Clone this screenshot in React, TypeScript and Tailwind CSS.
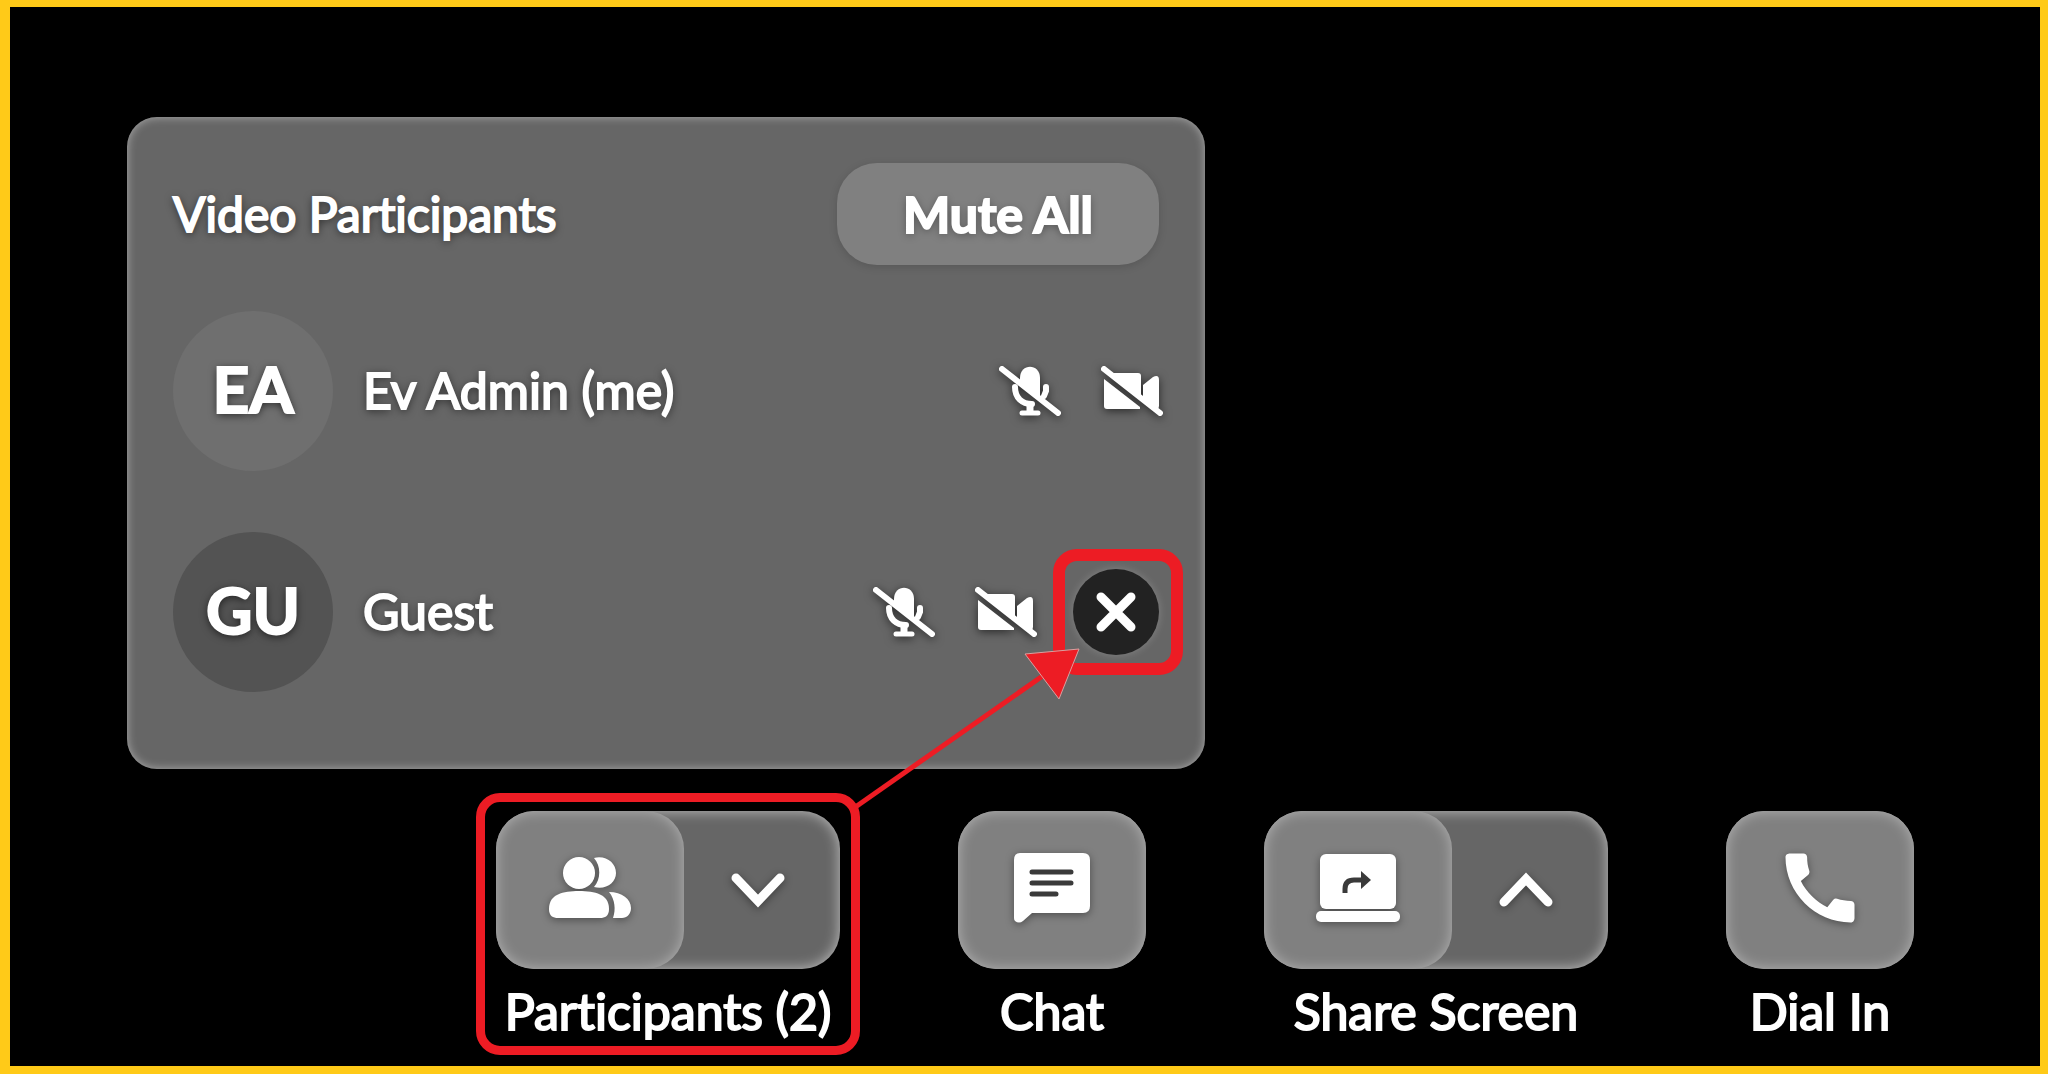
import type { ReactNode } from "react"
import { MdCall } from "react-icons/md"

function MicOffIcon() {
  return (
    <svg width="62" height="50" viewBox="0 0 62 50" fill="none" stroke="#fff" aria-hidden="true">
      <path d="M21 12C21 -3 41 -3 41 12V31L21 17Z" fill="#fff" stroke="none" />
      <path d="M16 21C16 32 23 38 33 38M47 21V25L45 30" strokeWidth="6" strokeLinecap="round" />
      <path d="M31 37V46" strokeWidth="7" />
      <path d="M23 47H39" strokeWidth="5" strokeLinecap="round" />
      <path d="M3 3L59 47" strokeWidth="6" strokeLinecap="round" />
    </svg>
  )
}

function VideoOffIcon() {
  return (
    <svg width="62" height="50" viewBox="0 0 62 50" fill="#fff" aria-hidden="true">
      <path d="M10 7H37Q40 7 40 10V30Z" />
      <path d="M3 13L39 41V43H6Q3 43 3 40Z" />
      <path d="M42 19L52 11Q58 8 58 14V40Q58 44 54 42L42 33Z" />
      <path d="M3 3L59 47" stroke="#fff" strokeWidth="6" strokeLinecap="round" />
    </svg>
  )
}

function PeopleIcon() {
  return (
    <svg width="84" height="64" viewBox="0 0 84 64" fill="#fff" aria-hidden="true">
      <circle cx="31" cy="17" r="16" />
      <path d="M46 2C58-1 68 7 68 17S58 34 46 31C53 23 53 10 46 2Z" />
      <path d="M1 53C1 38 15 35 31 35S61 38 61 53C61 60 57 62 52 62H10C5 62 1 60 1 53Z" />
      <path d="M61 36C74 36 83 43 83 52C83 58 79 62 74 62H65C68 54 67 43 61 36Z" />
    </svg>
  )
}

function ChatIcon() {
  return (
    <svg width="78" height="72" viewBox="0 0 78 72" aria-hidden="true">
      <path d="M7 1H70Q77 1 77 8V54Q77 61 70 61H19L10 69Q6 72 2 69Q1 68 1 66V8Q1 1 7 1Z" fill="#fff" />
      <path d="M19 20H58M19 31H58M19 42H43" stroke="#3a3a3a" strokeWidth="5" strokeLinecap="round" />
    </svg>
  )
}

function ShareIcon() {
  return (
    <svg width="84" height="69" viewBox="0 0 84 69" aria-hidden="true">
      <rect x="4" y="0" width="76" height="55" rx="6" fill="#fff" />
      <rect x="0" y="57" width="84" height="11" rx="5" fill="#fff" />
      <path d="M29 39V35Q29 26 38 26H46" fill="none" stroke="#3a3a3a" strokeWidth="5" />
      <path d="M45 17L55 26L45 35Z" fill="#3a3a3a" />
    </svg>
  )
}

function Chevron({ up = false }: { up?: boolean }) {
  return (
    <svg width="54" height="36" viewBox="0 0 54 36" fill="none" stroke="#fff" strokeWidth="9" strokeLinecap="round" aria-hidden="true">
      <path d={up ? "M5 30L27 7L49 30" : "M5 6L27 29L49 6"} />
    </svg>
  )
}

type ParticipantProps = {
  initials: string
  name: string
  avatarClass: string
  removable?: boolean
}

function Participant({ initials, name, avatarClass, removable = false }: ParticipantProps) {
  return (
    <li className="flex h-40 items-center">
      <span className={`flex size-40 shrink-0 items-center justify-center rounded-full pb-1 text-[64px] font-bold [text-shadow:0_2px_8px_rgba(0,0,0,0.7)] [-webkit-text-stroke:2px_#fff] ${avatarClass}`}>
        {initials}
      </span>
      <span className="ml-[30px] grow pb-0.5 text-[50px] [text-shadow:0_2px_8px_rgba(0,0,0,0.7)] [-webkit-text-stroke:2px_#fff]">{name}</span>
      <div className="-mr-1 flex items-center gap-10">
        <button type="button" aria-label={`Unmute ${name}`} className="drop-shadow-[0_2px_5px_rgba(0,0,0,0.6)]">
          <MicOffIcon />
        </button>
        <button type="button" aria-label={`Start video of ${name}`} className="drop-shadow-[0_2px_5px_rgba(0,0,0,0.6)]">
          <VideoOffIcon />
        </button>
        {removable && (
          <button type="button" aria-label={`Remove ${name}`} className="relative mr-1 -ml-1 flex size-[86px] items-center justify-center rounded-full bg-[#222] shadow-[0_0_8px_rgba(255,255,255,0.2)]">
            <svg width="42" height="42" viewBox="0 0 42 42" stroke="#fff" strokeWidth="9" strokeLinecap="round" aria-hidden="true">
              <path d="M6 6L36 36M36 6L6 36" />
            </svg>
            <span className="absolute -inset-y-5 -right-6 -left-5 rounded-3xl border-12 border-[#ed1c24]" />
          </button>
        )}
      </div>
    </li>
  )
}

type ToolProps = {
  label: string
  icon: ReactNode
  chevron?: "up" | "down"
  children?: ReactNode
}

function Tool({ label, icon, chevron, children }: ToolProps) {
  return (
    <div className="relative flex shrink-0 flex-col items-center">
      <div className="flex overflow-hidden rounded-[38px] bg-[#666] shadow-[inset_0_0_14px_rgba(255,255,255,0.6)]">
        <button
          type="button"
          aria-label={label}
          className="flex h-[158px] w-[188px] items-center justify-center rounded-[38px] bg-[#808080] pb-1 shadow-[inset_0_0_14px_rgba(255,255,255,0.4)]"
        >
          <span className="drop-shadow-[0_2px_4px_rgba(0,0,0,0.4)]">{icon}</span>
        </button>
        {chevron && (
          <button type="button" aria-label={`${label} options`} className="flex w-[156px] items-center justify-center pr-2">
            <span className="drop-shadow-[0_2px_4px_rgba(0,0,0,0.4)]"><Chevron up={chevron === "up"} /></span>
          </button>
        )}
      </div>
      <p className="mt-3.5 text-[50px] leading-14 whitespace-nowrap [-webkit-text-stroke:2px_#fff]">{label}</p>
      {children}
    </div>
  )
}

export default function App() {
  return (
    <main className="min-h-screen overflow-hidden border-8 border-t-7 border-l-10 border-[#ffca18] bg-black pt-[110px] pb-6 font-['Lato',sans-serif] text-white [font-variant-ligatures:none]">

      <section className="ml-[117px] w-full max-w-[1078px] rounded-[30px] bg-[#666] px-[46px] pt-[46px] pb-[77px] shadow-[inset_0_0_10px_rgba(255,255,255,0.45)]">
        <header className="flex items-center justify-between">
          <h1 className="text-5xl [text-shadow:0_2px_8px_rgba(0,0,0,0.7)] [-webkit-text-stroke:2px_#fff]">Video Participants</h1>
          <button type="button" className="h-[102px] w-[322px] rounded-[40px] bg-[#808080] text-[50px] font-bold shadow-[0_2px_8px_rgba(0,0,0,0.15)] [text-shadow:0_2px_8px_rgba(0,0,0,0.4)] [-webkit-text-stroke:2px_#fff]">
            Mute All
          </button>
        </header>
        <ul className="mt-[46px] flex flex-col gap-[61px]">
          <Participant initials="EA" name="Ev Admin (me)" avatarClass="bg-[#6f6f6f]" />
          <Participant initials="GU" name="Guest" avatarClass="bg-[#535353]" removable />
        </ul>
      </section>

      <nav className="mt-[42px] ml-[486px] flex gap-[118px]">
        <Tool label="Participants (2)" icon={<PeopleIcon />} chevron="down">
          <span className="pointer-events-none absolute -inset-x-5 -top-[18px] -bottom-4 rounded-3xl border-9 border-[#ed1c24]" />
          <svg className="pointer-events-none absolute bottom-full left-full" width="240" height="164" viewBox="0 0 240 164" aria-hidden="true">
            <path d="M14 161L204 28" stroke="#ed1c24" strokeWidth="5" />
            <path d="M185 7L239 2L219 52Z" fill="#ed1c24" stroke="#d9a0a0" />
          </svg>
        </Tool>
        <Tool label="Chat" icon={<ChatIcon />} />
        <Tool label="Share Screen" icon={<ShareIcon />} chevron="up" />
        <Tool label="Dial In" icon={<MdCall size={92} />} />
      </nav>

    </main>
  )
}
